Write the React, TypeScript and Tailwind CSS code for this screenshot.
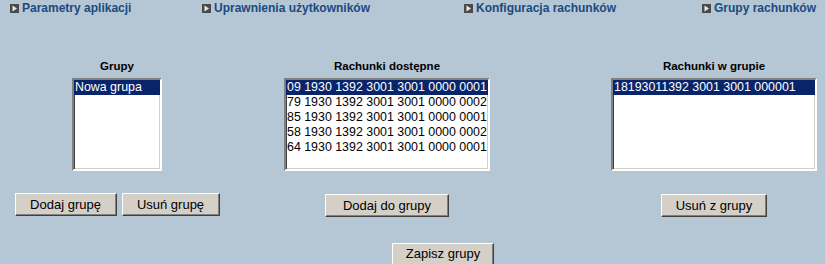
// Konfiguracja grup rachunków — classic bank admin form with three list boxes.

const navItems = [
  "Parametry aplikacji",
  "Uprawnienia użytkowników",
  "Konfiguracja rachunków",
  "Grupy rachunków",
];

const accounts = [
  "09 1930 1392 3001 3001 0000 0001",
  "79 1930 1392 3001 3001 0000 0002",
  "85 1930 1392 3001 3001 0000 0001",
  "58 1930 1392 3001 3001 0000 0002",
  "64 1930 1392 3001 3001 0000 0001",
];

function NavIcon() {
  return (
    <svg width="9" height="9" viewBox="0 0 9 9" className="shrink-0">
      <rect width="9" height="9" fill="#4a4a4a" />
      <polygon points="2.5,1.5 7,4.5 2.5,7.5" fill="#e8e8e8" />
    </svg>
  );
}

function ListBox({ items, width }: { items: string[]; width: string }) {
  return (
    <div
      className={`${width} h-[93px] overflow-hidden border-2 border-t-[#808080] border-l-[#808080] border-r-white border-b-white bg-white shadow-[inset_1px_1px_0_#404040,inset_-1px_-1px_0_#d4d0c8] text-[12.4px] leading-[15px] text-black`}
    >
      {items.map((item, i) => (
        <div
          key={i}
          className={`h-[15px] whitespace-nowrap pl-[1px] ${i === 0 ? "bg-[#0a246a] text-white" : ""}`}
        >
          {item}
        </div>
      ))}
    </div>
  );
}

function Button({ label, width }: { label: string; width: string }) {
  return (
    <button
      type="button"
      className={`${width} h-[23px] border border-t-white border-l-white border-r-[#404040] border-b-[#404040] bg-[#d4d0c8] text-[13px] text-black shadow-[inset_-1px_-1px_0_#808080]`}
    >
      {label}
    </button>
  );
}

function Column({ title, children }: { title: string; children: React.ReactNode }) {
  return (
    <div className="flex flex-col items-center">
      <div className="h-[14px] text-[11.5px] font-bold leading-[14px] text-black">{title}</div>
      <div className="mt-[5px] flex flex-col items-center">{children}</div>
    </div>
  );
}

export default function App() {
  return (
    <div className="h-[264px] w-[825px] overflow-hidden bg-[#b5c6d5] font-['Liberation_Sans',Arial,sans-serif]">
      <nav className="grid grid-cols-[192px_262px_238px_1fr] pl-[10px] pt-[1px]">
        {navItems.map((item) => (
          <a
            key={item}
            href="#"
            className="flex h-[14px] items-center gap-[3px] whitespace-nowrap text-[12px] font-bold leading-[14px] text-[#1a4a80]"
          >
            <NavIcon />
            {item}
          </a>
        ))}
      </nav>

      <div className="mt-[44px] flex">
        <div className="w-[234px]">
          <Column title="Grupy">
            <ListBox items={["Nowa grupa"]} width="w-[90px]" />
            <div className="mt-[22px] flex gap-[5px]">
              <Button label="Dodaj grupę" width="w-[102px]" />
              <Button label="Usuń grupę" width="w-[98px]" />
            </div>
          </Column>
        </div>
        <div className="w-[306px]">
          <Column title="Rachunki dostępne">
            <ListBox items={accounts} width="w-[206px]" />
            <div className="mt-[22px]">
              <Button label="Dodaj do grupy" width="w-[124px]" />
            </div>
          </Column>
        </div>
        <div className="ml-[71px] w-[206px]">
          <Column title="Rachunki w grupie">
            <ListBox items={["18193011392 3001 3001 000001"]} width="w-[206px]" />
            <div className="mt-[22px]">
              <Button label="Usuń z grupy" width="w-[106px]" />
            </div>
          </Column>
        </div>
      </div>

      <div className="ml-[392px] mt-[24px]">
        <Button label="Zapisz grupy" width="w-[102px]" />
      </div>
    </div>
  );
}
